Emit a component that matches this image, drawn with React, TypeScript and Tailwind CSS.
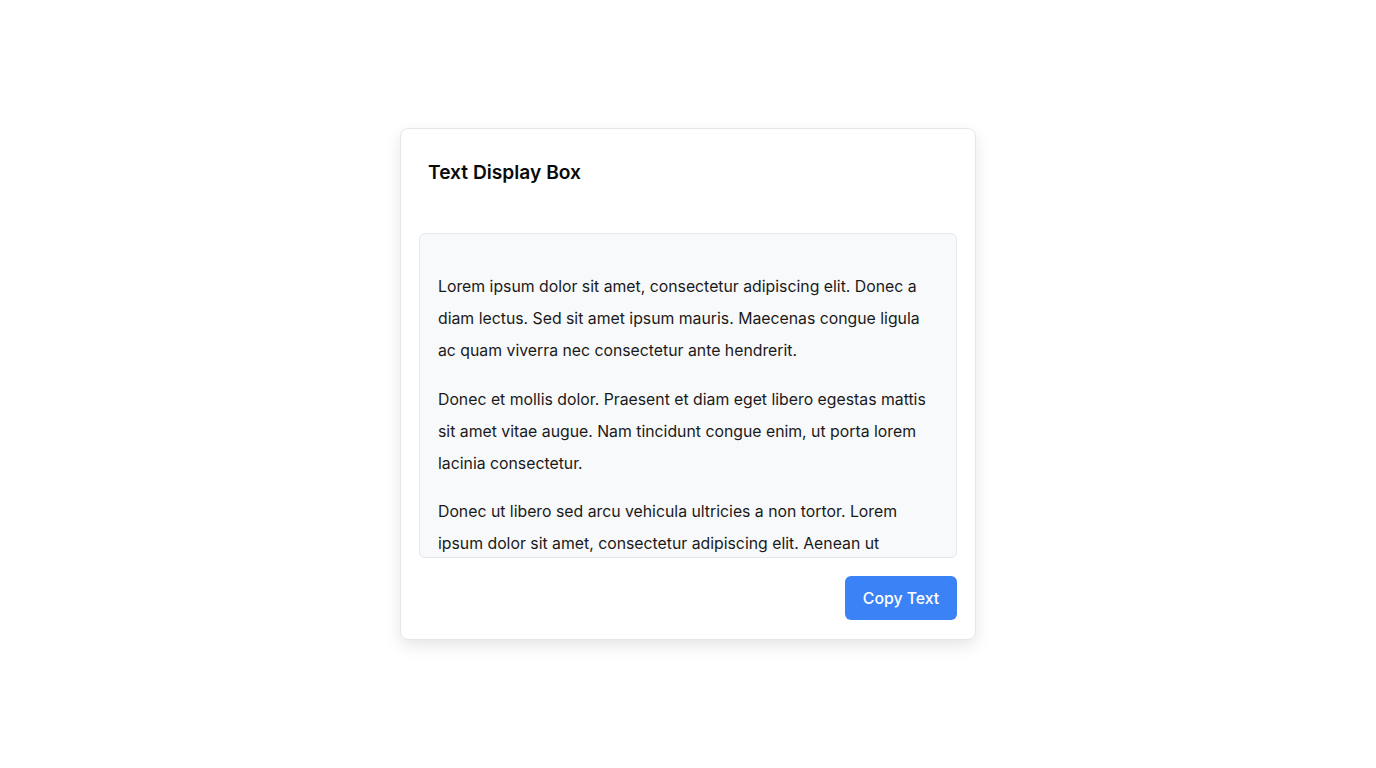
const paragraphs = [
  'Lorem ipsum dolor sit amet, consectetur adipiscing elit. Donec a diam lectus. Sed sit amet ipsum mauris. Maecenas congue ligula ac quam viverra nec consectetur ante hendrerit.',
  'Donec et mollis dolor. Praesent et diam eget libero egestas mattis sit amet vitae augue. Nam tincidunt congue enim, ut porta lorem lacinia consectetur.',
  'Donec ut libero sed arcu vehicula ultricies a non tortor. Lorem ipsum dolor sit amet, consectetur adipiscing elit. Aenean ut gravida lorem. Ut turpis felis, pulvinar a semper sed, adipiscing id dolor.',
];

export default function App() {
  return (
    <div className="flex h-[768px] w-full items-center justify-center bg-white font-['Inter',sans-serif]">
      <div className="w-[576px] rounded-lg border border-[#e5e7eb] bg-white px-[18px] pt-[18px] pb-[19px] shadow-[0_6px_16px_rgba(0,0,0,0.1)]">
        {/* Header */}
        <div className="h-[86px] pl-[9px] pt-[10px]">
          <h2 className="text-[19.2px] leading-[30px] font-semibold text-[#0a0a0a]">Text Display Box</h2>
        </div>

        {/* Scrollable text area */}
        <div className="h-[325px] overflow-hidden rounded-md border border-[#e5e7eb] bg-[#f8f9fa] pl-[18px] pr-[20px] pt-[21px]">
          {paragraphs.map((p, i) => (
            <p key={i} className="my-[16.4px] text-[15.8px] leading-[32px] text-[#1a1a1a]">
              {p}
            </p>
          ))}
        </div>

        <div className="mt-[18px] flex justify-end">
          <button className="h-[44px] w-[112px] rounded-md bg-[#3b82f6] pt-[1px] text-[15.8px] font-medium text-white">
            Copy Text
          </button>
        </div>
      </div>
    </div>
  );
}
